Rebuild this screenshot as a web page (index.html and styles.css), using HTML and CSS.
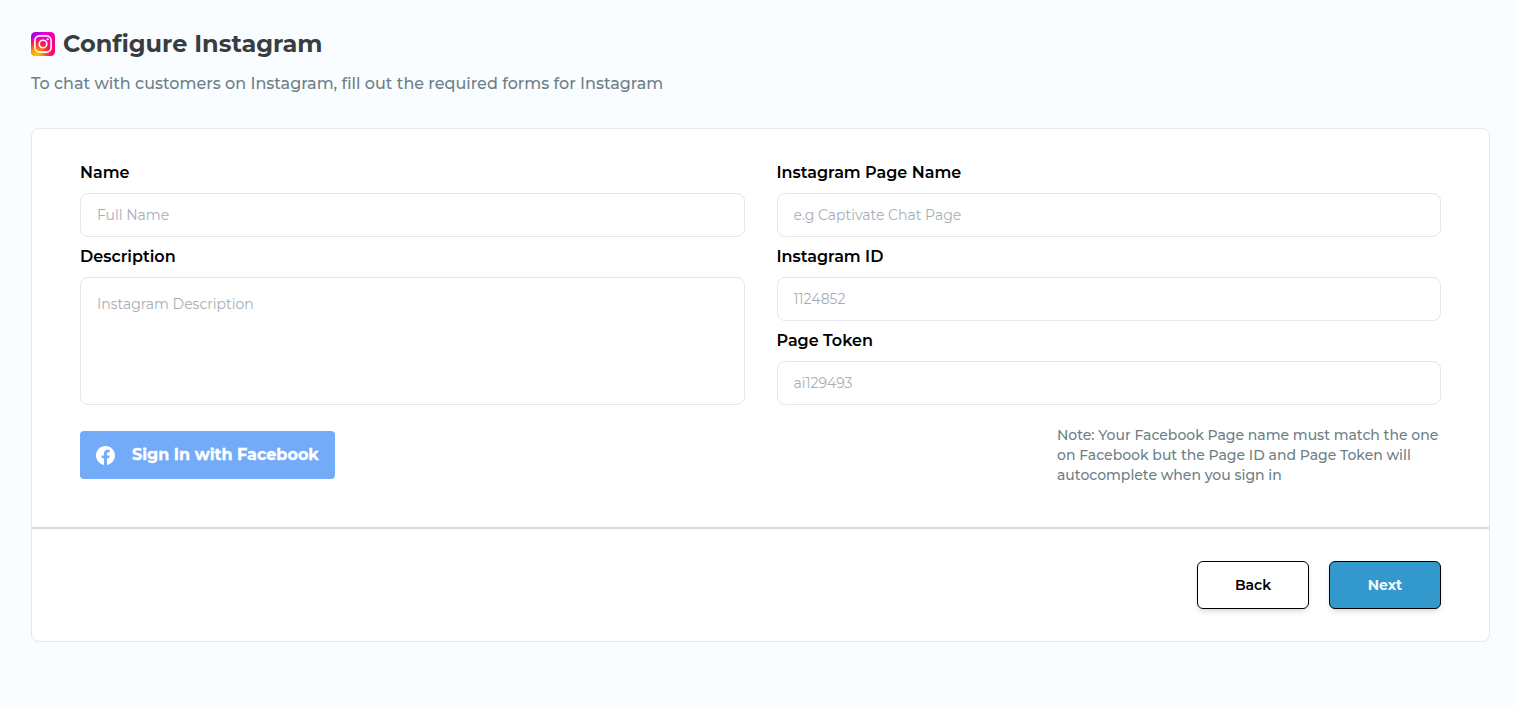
FILE: index.html
```html
<!DOCTYPE html>
<html lang="en">
<head>
<meta charset="utf-8">
<title>Configure Instagram</title>
<link rel="stylesheet" href="styles.css">
</head>
<body>
<main class="page">
  <header class="page-header">
    <h1 class="title">
      <svg class="title-icon" viewBox="0 0 24 24" aria-hidden="true">
        <defs>
          <linearGradient id="ig-base" x1="0" y1="0" x2="1" y2="1">
            <stop offset="0" stop-color="#8a00ff"/>
            <stop offset=".3" stop-color="#e800d8"/>
            <stop offset=".6" stop-color="#ff0090"/>
            <stop offset="1" stop-color="#ff0070"/>
          </linearGradient>
          <radialGradient id="ig-glow" cx=".2" cy="1.02" r=".85">
            <stop offset="0" stop-color="#ffd000"/>
            <stop offset=".3" stop-color="#ff9a00"/>
            <stop offset=".62" stop-color="#ff2a38"/>
            <stop offset="1" stop-color="#ff0070" stop-opacity="0"/>
          </radialGradient>
        </defs>
        <rect width="24" height="24" rx="4.5" fill="url(#ig-base)"/>
        <rect width="24" height="24" rx="4.5" fill="url(#ig-glow)"/>
        <rect x="3.9" y="3.9" width="16.2" height="16.2" rx="4.6" fill="none" stroke="#fff" stroke-width="1.6"/>
        <circle cx="12" cy="12" r="3.8" fill="none" stroke="#fff" stroke-width="1.6"/>
        <circle cx="16.7" cy="7.3" r="1.1" fill="#fff"/>
      </svg>
      <span class="title-text">Configure Instagram</span>
    </h1>
    <p class="subtitle">To chat with customers on Instagram, fill out the required forms for Instagram</p>
  </header>
  <form class="card">
    <div class="card-body">
      <div class="columns">
        <div class="column">
          <label class="label" for="name">Name</label>
          <input class="field" id="name" placeholder="Full Name">
          <label class="label" for="description">Description</label>
          <textarea class="field field-area" id="description" placeholder="Instagram Description"></textarea>
        </div>
        <div class="column">
          <label class="label" for="page-name">Instagram Page Name</label>
          <input class="field" id="page-name" placeholder="e.g Captivate Chat Page">
          <label class="label" for="page-id">Instagram ID</label>
          <input class="field" id="page-id" placeholder="1124852">
          <label class="label" for="token">Page Token</label>
          <input class="field" id="token" placeholder="ai129493">
        </div>
      </div>
      <div class="signin-row">
        <button class="facebook" type="button">
          <svg class="facebook-icon" viewBox="0 0 24 24" aria-hidden="true"><path fill="#fff" d="M24 12.07C24 5.44 18.63.07 12 .07S0 5.44 0 12.07c0 5.99 4.39 10.95 10.13 11.86v-8.39H7.08v-3.47h3.05V9.43c0-3.01 1.79-4.67 4.53-4.67 1.31 0 2.69.23 2.69.23v2.95h-1.51c-1.49 0-1.96.93-1.96 1.88v2.25h3.33l-.53 3.47h-2.8v8.39C19.61 23.02 24 18.06 24 12.07z"/></svg>
          <span class="facebook-text">Sign In with Facebook</span>
        </button>
        <p class="note">Note: Your Facebook Page name must match the one on Facebook but the Page ID and Page Token will autocomplete when you sign in</p>
      </div>
    </div>
    <footer class="card-footer">
      <button class="action" type="button">Back</button>
      <button class="action action-primary" type="button">Next</button>
    </footer>
  </form>
</main>
</body>
</html>
```

FILE: styles.css
```css
* { box-sizing: border-box; }

body {
  margin: 0;
  min-height: 100vh;
  background: #fafdff;
  font-family: Montserrat, Inter, sans-serif;
  color: #000;
}

button, input, textarea { font-family: inherit; }

.page { padding: 28px 26px 0 31px; }

.page-header {
  display: flex;
  flex-direction: column;
  gap: 12px;
  height: 100px;
}

.title {
  display: flex;
  align-items: center;
  gap: 8px;
  margin: 0;
  font-size: 24px;
  line-height: 32px;
  font-weight: 700;
  color: #3a3d3f;
}

.title-icon { width: 24px; height: 24px; }
.title-text { white-space: nowrap; }

.subtitle {
  margin: 0;
  font-size: 16px;
  line-height: 24px;
  font-weight: 500;
  color: #6d7f86;
}

.card {
  background: #fff;
  border: 1px solid #e5e7eb;
  border-radius: 8px;
}

.card-body {
  padding: 32px 48px 42px;
  border-bottom: 2px solid #d9d9d9;
}

.columns {
  display: grid;
  grid-template-columns: 1fr 1fr;
  gap: 32px;
}

.column {
  display: flex;
  flex-direction: column;
  gap: 8px;
}

.label {
  align-self: flex-start;
  font-size: 16px;
  line-height: 24px;
  font-weight: 600;
}

.field {
  display: block;
  width: 100%;
  height: 44px;
  padding: 0 16px;
  border: 1px solid #e5e7eb;
  border-radius: 8px;
  background: #fff;
  font-size: 14px;
  line-height: 20px;
  outline: none;
}

.field::placeholder { color: #a7adb8; opacity: 1; }

.field-area {
  height: 128px;
  padding: 16px;
  resize: none;
}

.signin-row {
  display: flex;
  align-items: center;
  justify-content: space-between;
  margin-top: 20px;
}

.facebook {
  display: flex;
  align-items: center;
  gap: 17px;
  width: 255px;
  height: 48px;
  padding: 0 16px;
  border: 0;
  border-radius: 4px;
  background: #74abf8;
  color: #fff;
  font-size: 16px;
  font-weight: 700;
}

.facebook-icon { flex: none; width: 19px; height: 19px; }

.facebook-text {
  padding-bottom: 2px;
  white-space: nowrap;
  -webkit-text-stroke: 0.3px #fff;
}

.note {
  width: 384px;
  margin: 0;
  font-size: 14px;
  line-height: 20px;
  font-weight: 500;
  color: #6d7f86;
}

.card-footer {
  display: flex;
  justify-content: flex-end;
  gap: 20px;
  padding: 32px 48px;
}

.action {
  width: 112px;
  height: 48px;
  padding: 0;
  border: 1px solid #000;
  border-radius: 6px;
  background: #fff;
  color: #000;
  font-size: 14px;
  font-weight: 600;
  box-shadow: 0 4px 6px -1px rgba(0, 0, 0, 0.1), 0 2px 4px -2px rgba(0, 0, 0, 0.1);
}

.action-primary {
  background: #3398cc;
  color: #f2f9fd;
  font-weight: 700;
}
```
